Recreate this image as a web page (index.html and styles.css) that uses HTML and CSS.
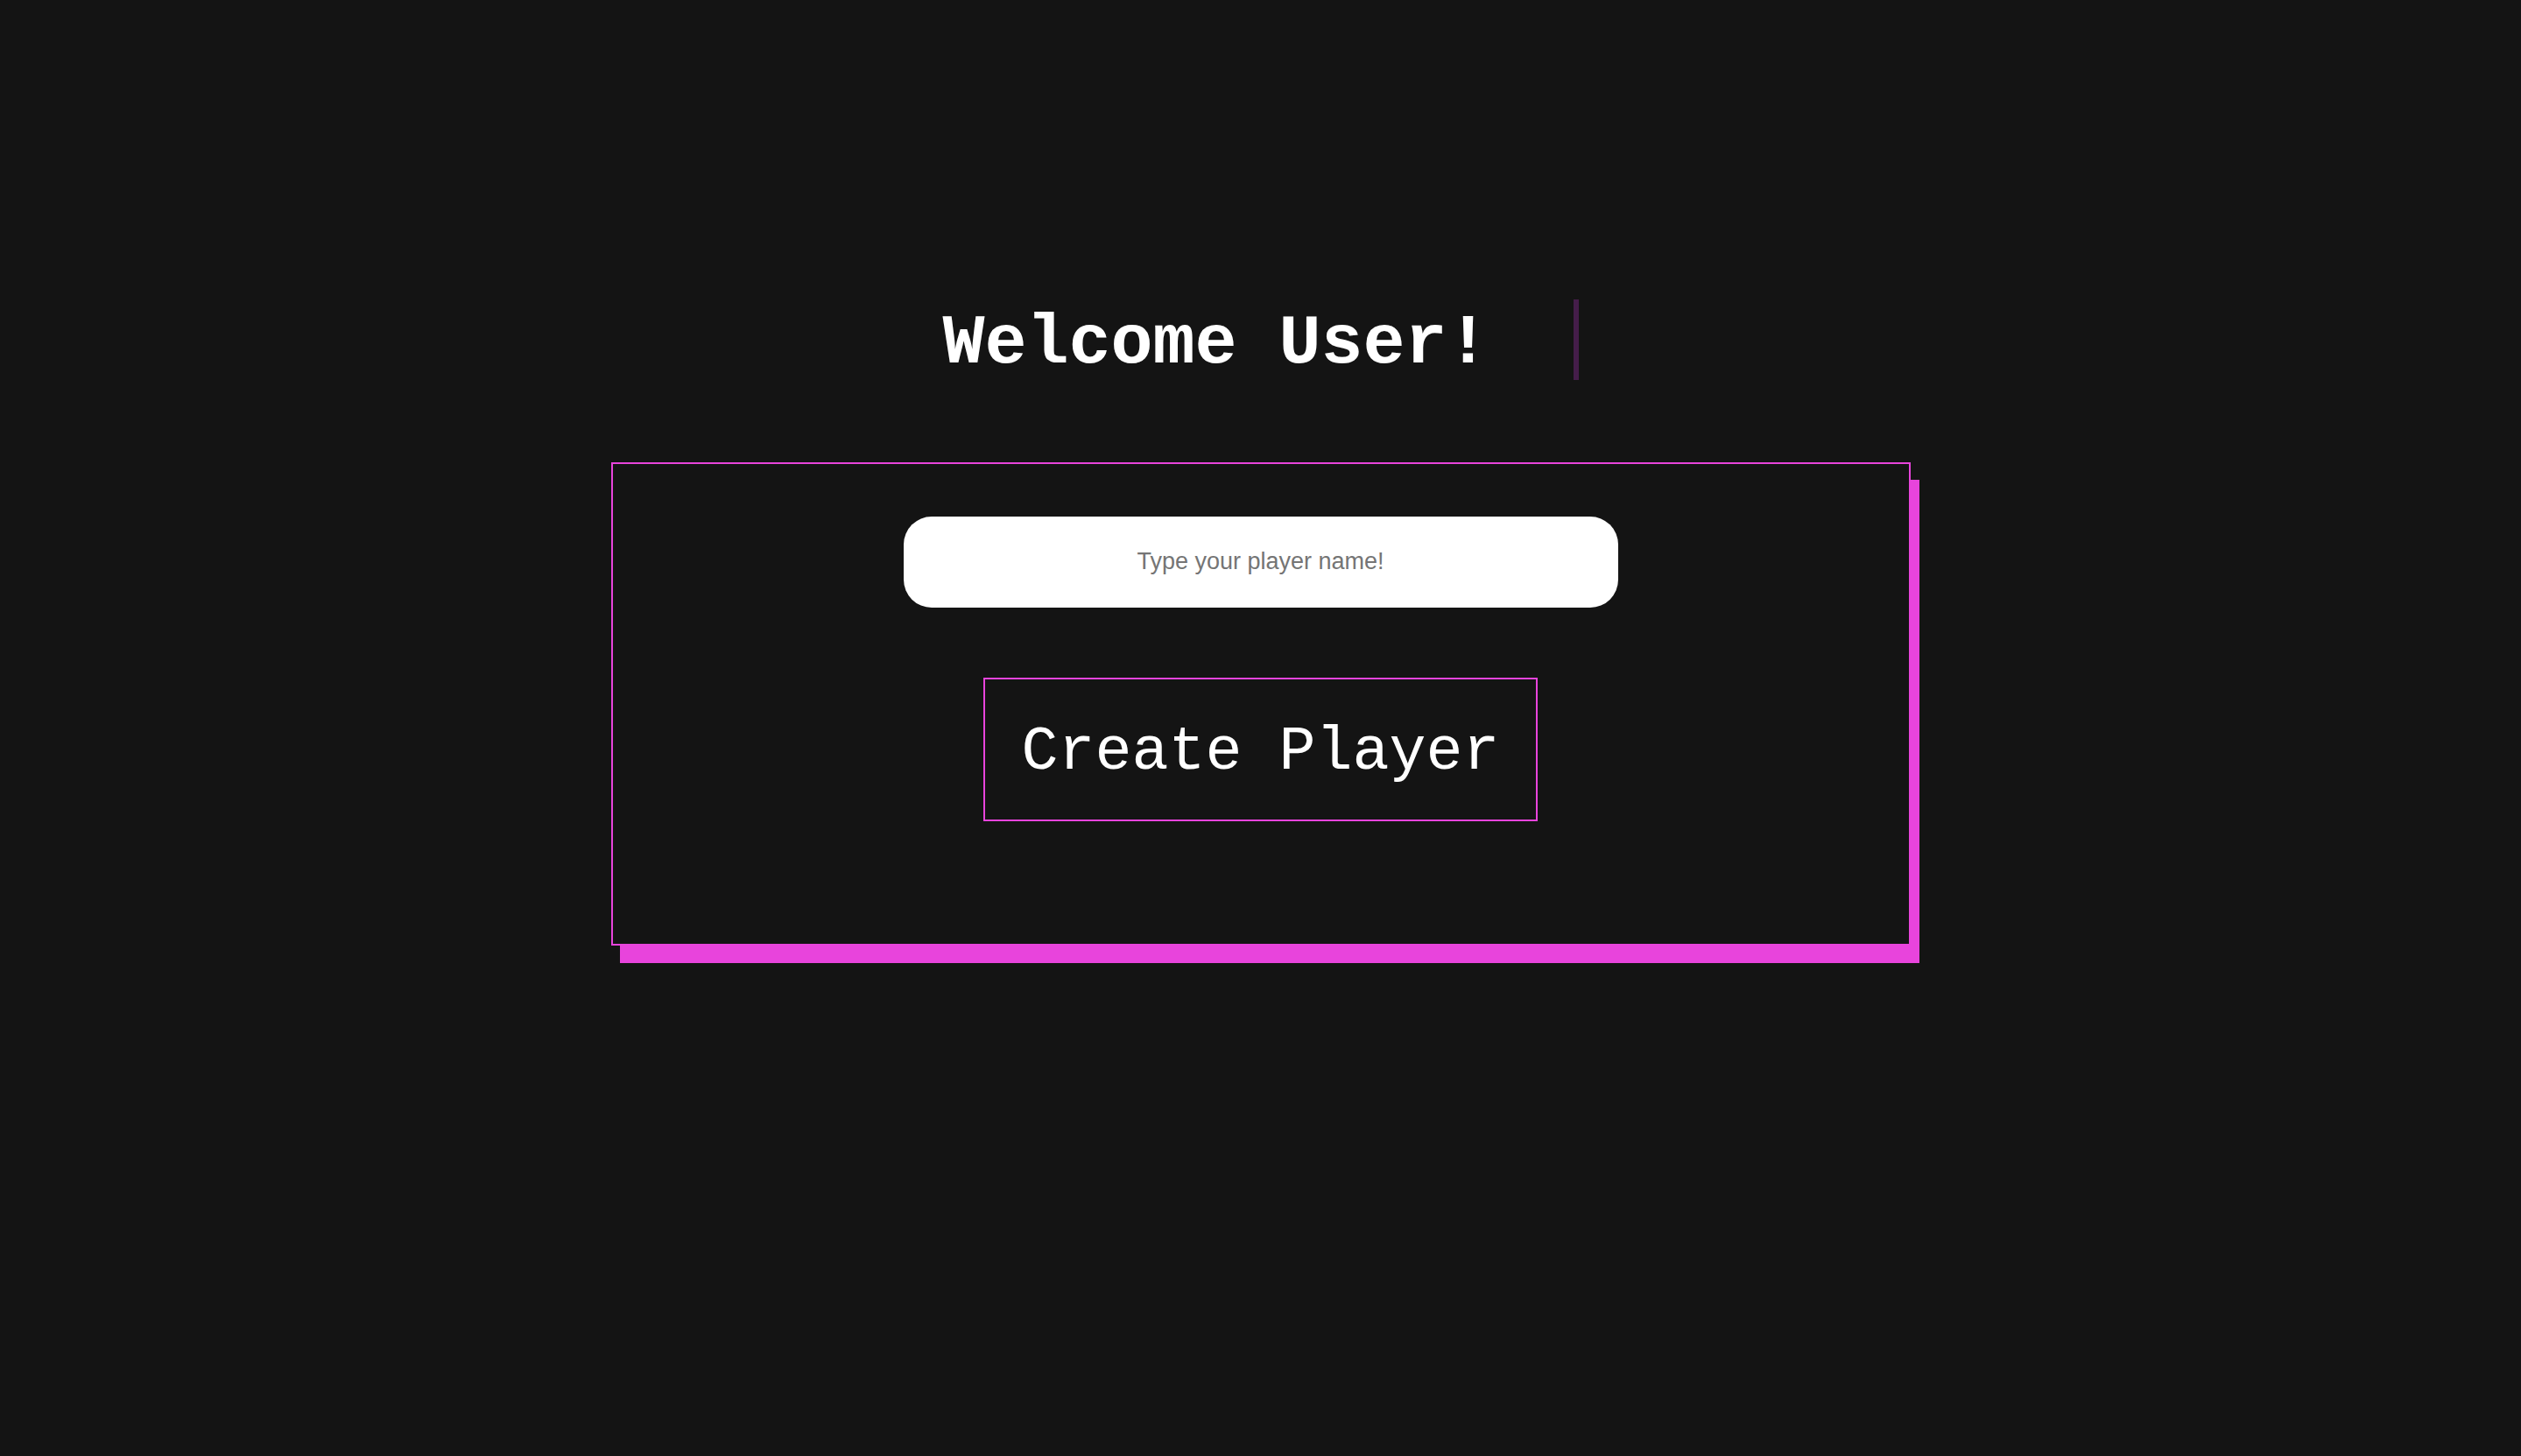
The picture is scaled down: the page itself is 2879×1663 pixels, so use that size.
FILE: index.html
```html
<!DOCTYPE html>
<html lang="en">
<head>
<meta charset="utf-8">
<meta name="viewport" content="width=device-width, initial-scale=1">
<title>Welcome</title>
<link rel="stylesheet" href="styles.css">
</head>
<body>
<main class="page">
  <h1 class="welcome">Welcome User!</h1>
  <form class="card">
    <input class="name-input" type="text" aria-label="Player name" placeholder="Type your player name!">
    <button class="create-button" type="button">Create Player</button>
  </form>
</main>
</body>
</html>
```

FILE: styles.css
```css
* {
  box-sizing: border-box;
}

body {
  margin: 0;
  min-height: 100vh;
  background: #141414;
  color: #fff;
  font-family: "Courier New", "Liberation Mono", monospace;
}

.page {
  display: flex;
  flex-direction: column;
  align-items: center;
  gap: 94px;
  padding: 342px 32px 64px;
}

/* The right border is the typing caret. */
.welcome {
  box-sizing: content-box;
  width: 15ch;
  margin: 0;
  padding-top: 10px;
  border-right: 6px solid #451d4a;
  font-size: 80px;
  font-weight: 700;
  line-height: 82px;
  white-space: nowrap;
}

.card {
  display: flex;
  flex-direction: column;
  align-items: center;
  gap: 80px;
  width: 100%;
  max-width: 1484px;
  padding: 60px 32px 140px;
  border: 2px solid #e844dc;
  box-shadow: 10px 20px #e844dc;
}

.name-input {
  width: 100%;
  max-width: 816px;
  height: 104px;
  padding: 0 32px 2px;
  border: 0;
  border-radius: 32px;
  background: #fff;
  color: #141414;
  font-family: "Liberation Sans", Arial, sans-serif;
  font-size: 27px;
  text-align: center;
}

.name-input::placeholder {
  color: #757575;
}

.create-button {
  padding: 44px 41px 36px;
  border: 2px solid #e844dc;
  background: transparent;
  color: #fff;
  font-family: inherit;
  font-size: 70px;
  line-height: 80px;
}
```
